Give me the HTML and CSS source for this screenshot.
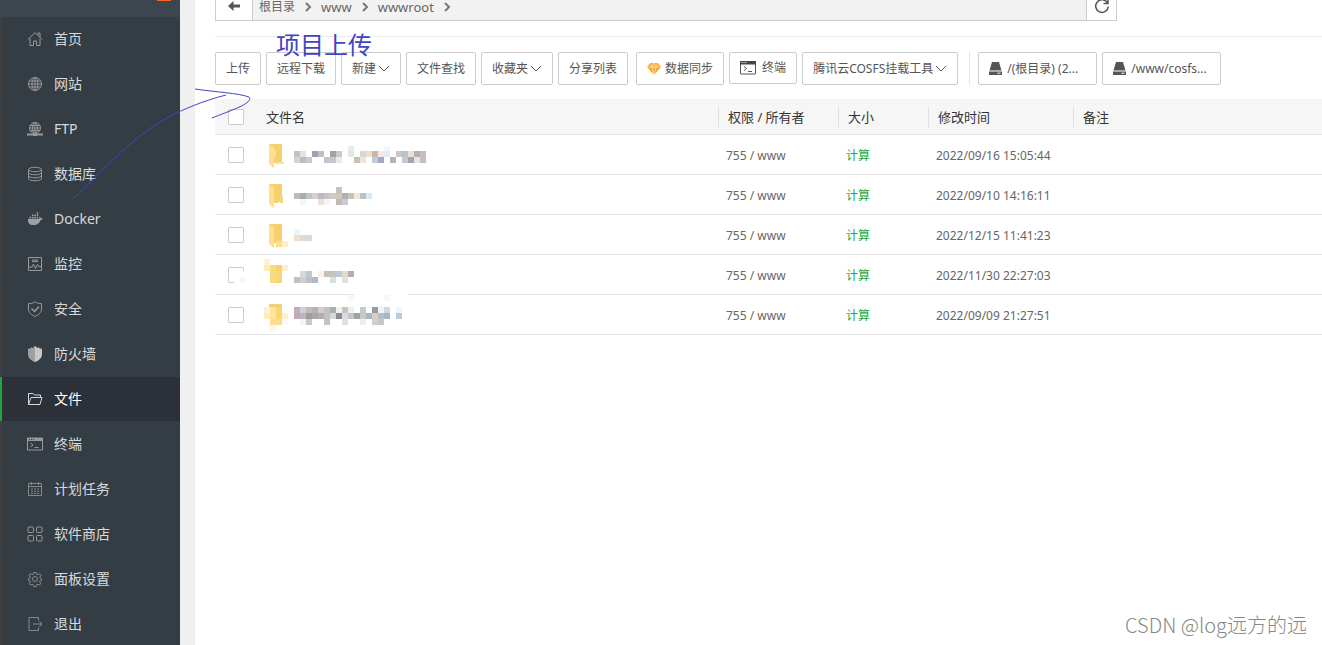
FILE: index.html
```html
<!DOCTYPE html>
<html lang="zh-CN">
<head>
<meta charset="utf-8">
<title>文件</title>
<link rel="stylesheet" href="styles.css">
</head>
<body>
<div class="app">
  <aside class="sidebar">
    <div class="sidebar-head"><span class="badge"></span></div>
    <nav class="menu">
      <a class="item" href="#"><svg class="ico" viewBox="0 0 16 16"><path d="M1 8.5 8 1.5l7 7M3 7.5V14.5h3.5V10h3v4.5H13V7.5M11 4V2h2v4"/></svg>首页</a>
      <a class="item" href="#"><svg class="ico" viewBox="0 0 16 16"><circle cx="8" cy="8" r="6.5"/><ellipse cx="8" cy="8" rx="3" ry="6.5"/><path d="M8 1.5v13M1.5 8h13M2.5 5h11M2.5 11h11"/></svg>网站</a>
      <a class="item" href="#"><svg class="ico" viewBox="0 0 16 16"><circle cx="8" cy="7" r="5.5"/><ellipse cx="8" cy="7" rx="2.5" ry="5.5"/><path d="M8 1.5v11M2.5 7h11M3 4.5h10M3 9.5h10"/><path d="M0 13.5h16M6 14h4" stroke-width="2"/></svg>FTP</a>
      <a class="item" href="#"><svg class="ico" viewBox="0 0 16 16"><ellipse cx="8" cy="3.5" rx="6.5" ry="2.2"/><path d="M1.500 3.500v9c0 3 13 3 13 0v-9M1.500 6.500c0 3 13 3 13 0M1.500 9.500c0 3 13 3 13 0"/></svg>数据库</a>
      <a class="item" href="#"><svg class="ico solid" viewBox="0 0 16 16"><path d="M1 8h11c.7-.5.5-2 .2-2.600 1 .2 1.500 1 1.500 1.800.9-.1 1.700.1 2.300.5-.4 1-1.500 1.200-2.500 1.200C12 13 9.500 14 6 14c-3.500 0-5.200-2-5-6zM2.500 5.800h1.600v1.600H2.500zM4.900 5.800h1.600v1.600H4.900zM7.300 5.800h1.600v1.600H7.300zM9.700 5.800h1.600v1.600H9.700zM4.900 3.500h1.600v1.600H4.900zM7.300 3.500h1.600v1.600H7.300zM9.700 3.500h1.600v1.600H9.700zM9.700 1.200h1.600v1.600H9.700z"/></svg>Docker</a>
      <a class="item" href="#"><svg class="ico" viewBox="0 0 16 16"><path d="M1.500 1.500h13v13h-13zM5 4h6M5 5.500h6M2 11h3l1.500-3 2 4.500 2-4 1 2H14"/></svg>监控</a>
      <a class="item" href="#"><svg class="ico" viewBox="0 0 16 16"><path d="M8 .8c2 1.400 4.200 1.800 6.500 1.800V8c0 3.500-3 6-6.500 7.300C4.500 14 1.500 11.500 1.500 8V2.600C3.800 2.600 6 2.200 8 .8z"/><path d="m4.500 7.500 3 3 4.500-5" stroke-width="1.500"/></svg>安全</a>
      <a class="item" href="#"><svg class="ico wall" viewBox="0 0 16 16"><path fill="#a0a0a0" d="M8 0v16C4 14.500 1 12 1 8V3l1.500-1v1L4 2V1l1.500 1L7 1V.5z"/><path fill="#c8c8c8" d="M8 0v16c4-1.500 7-4 7-8V3l-1.500-1v1L12 2V1l-1.500 1L9 1V.5z"/></svg>防火墙</a>
      <a class="item active" href="#" aria-current="page"><svg class="ico" viewBox="0 0 16 16"><path d="M1.500 13.500v-11h4.500l1.500 1.500h6v2.500M1.500 13.500 4 6.500h11l-2 7z"/></svg>文件</a>
      <a class="item" href="#"><svg class="ico" viewBox="0 0 16 16"><path d="M.5 2h15v12H.5zM3.500 7l2.500 2-2.500 2M7.500 11.500h4"/><path d="M1 3.500h14" stroke-width="3"/><path d="M2 3.500h1M4 3.500h1M6 3.500h1" stroke="#353d44"/></svg>终端</a>
      <a class="item" href="#"><svg class="ico dim" viewBox="0 0 16 16"><path d="M1.500 2.500h13v12h-13zM1.500 5.500h13M4.500 1v3M11.500 1v3M4 8h2M7 8h2M10 8h2M4 10.200h2M7 10.200h2M10 10.200h2M4 12.400h2M7 12.400h2M10 12.400h2"/></svg>计划任务</a>
      <a class="item" href="#"><svg class="ico" viewBox="0 0 16 16"><rect x="1" y="1" width="5.500" height="5.500" rx="1"/><rect x="9.500" y="1" width="5.500" height="5.500" rx="1"/><rect x="1" y="9.500" width="5.500" height="5.500" rx="1"/><rect x="9.500" y="9.500" width="5.500" height="5.500" rx="1"/></svg>软件商店</a>
      <a class="item" href="#"><svg class="ico dim" viewBox="0 0 16 16"><circle cx="8" cy="8" r="2.500"/><path d="M6.800 1.500h2.400l.5 1.800 1.600 0 1.700-.4 1 1.800-1.300 1.300.2 1 1.600.4v2l-1.600.5-.2 1.200 1.200 1.200-1.200 1.600-1.700-.5-1.300.3-.5 1.800H6.800l-.5-1.800-1.300-.3-1.700.5-1.200-1.600 1.200-1.200-.2-1.200-1.600-.5v-2l1.600-.4.2-1L2 4.700l1-1.800 1.700.4 1.600 0z"/></svg>面板设置</a>
      <a class="item" href="#"><svg class="ico dim" viewBox="0 0 16 16"><path d="M11.500 4.500v-3h-9.500v13h9.500v-3M6 8h9M12.500 5.500 15 8l-2.500 2.500"/></svg>退出</a>
    </nav>
  </aside>

  <main class="content">
    <div class="pathbar">
      <button class="path-btn back" aria-label="返回"><svg width="14" height="12" viewBox="0 0 14 12"><path d="M1 6 6.500 1v3.500H13v3H6.500V11z" fill="#555"/></svg></button>
      <div class="crumbs">
        <a href="#">根目录</a><svg class="sep" viewBox="0 0 8 10"><path d="m2 1 4 4-4 4"/></svg>
        <a href="#" class="latin">www</a><svg class="sep" viewBox="0 0 8 10"><path d="m2 1 4 4-4 4"/></svg>
        <a href="#" class="latin">wwwroot</a><svg class="sep" viewBox="0 0 8 10"><path d="m2 1 4 4-4 4"/></svg>
      </div>
      <button class="path-btn refresh" aria-label="刷新"><svg width="16" height="14" viewBox="0 2 16 14"><path d="M13.500 5A6.300 6.300 0 1 0 14.300 8.500M14 1v4.500H9.500" fill="none" stroke="#555" stroke-width="1.500"/></svg></button>
    </div>

    <div class="toolbar">
      <button class="btn">上传</button>
      <button class="btn">远程下载</button>
      <button class="btn">新建<svg class="down" viewBox="0 0 12 8"><path d="m1 1 5 5 5-5"/></svg></button>
      <button class="btn">文件查找</button>
      <button class="btn">收藏夹<svg class="down" viewBox="0 0 12 8"><path d="m1 1 5 5 5-5"/></svg></button>
      <button class="btn">分享列表</button>
      <button class="btn sync"><svg class="gem" viewBox="0 0 14 12"><path d="M3 0h8l3 4-7 8-7-8z" fill="#fba51f"/><path d="M0 4h14M3 0l2 4 2 8 2-8 2-4M5 4l2-4 2 4" fill="none" stroke="#fff" stroke-width=".6"/></svg>数据同步</button>
      <button class="btn term"><svg class="term-ico" viewBox="0 0 16 14"><path d="M.5 1h15v12H.5zM4 5.500l2.500 2L4 9.500M8 10.500h4" fill="none" stroke="#555"/><path d="M0 0h16v3.500H0z" fill="#444"/><path d="M1.500 1.500h1M3.500 1.500h1M5.500 1.500h1" stroke="#fff"/></svg>终端</button>
      <button class="btn">腾讯云COSFS挂载工具<svg class="down" viewBox="0 0 12 8"><path d="m1 1 5 5 5-5"/></svg></button>
      <span class="divider"></span>
      <button class="btn disk"><svg class="disk-ico" viewBox="0 0 13 13"><path d="M3 0h7l2.500 8.500H.5zM0 9.500h13V13H0z"/><path d="M8.500 11.200h3" stroke="#fff"/></svg>/(根目录) (2...</button>
      <button class="btn disk"><svg class="disk-ico" viewBox="0 0 13 13"><path d="M3 0h7l2.500 8.500H.5zM0 9.500h13V13H0z"/><path d="M8.500 11.200h3" stroke="#fff"/></svg>/www/cosfs...</button>
    </div>

    <table class="files">
      <colgroup><col class="c-check"><col class="c-name"><col class="c-perm"><col class="c-size"><col class="c-time"><col></colgroup>
      <thead>
        <tr><th class="check"><input type="checkbox" aria-label="全选"></th><th><span class="plain">文件名</span></th><th><span>权限 / 所有者</span></th><th><span>大小</span></th><th><span>修改时间</span></th><th><span>备注</span></th></tr>
      </thead>
      <tbody>
        <tr><td class="check"><input type="checkbox" aria-label="选择第1项"></td><td class="file"><svg class="name" viewBox="0 0 180 39" data-row="0"></svg></td><td>755 / www</td><td><a href="#">计算</a></td><td>2022/09/16 15:05:44</td><td></td></tr>
        <tr><td class="check"><input type="checkbox" aria-label="选择第2项"></td><td class="file"><svg class="name" viewBox="0 0 180 39" data-row="1"></svg></td><td>755 / www</td><td><a href="#">计算</a></td><td>2022/09/10 14:16:11</td><td></td></tr>
        <tr><td class="check"><input type="checkbox" aria-label="选择第3项"></td><td class="file"><svg class="name" viewBox="0 0 180 39" data-row="2"></svg></td><td>755 / www</td><td><a href="#">计算</a></td><td>2022/12/15 11:41:23</td><td></td></tr>
        <tr><td class="check"><input type="checkbox" aria-label="选择第4项"></td><td class="file"><svg class="name" viewBox="0 0 180 39" data-row="3"></svg></td><td>755 / www</td><td><a href="#">计算</a></td><td>2022/11/30 22:27:03</td><td></td></tr>
        <tr><td class="check"><input type="checkbox" aria-label="选择第5项"></td><td class="file"><svg class="name" viewBox="0 0 180 39" data-row="4"></svg></td><td>755 / www</td><td><a href="#">计算</a></td><td>2022/09/09 21:27:51</td><td></td></tr>
      </tbody>
    </table>
  </main>

  <svg class="ink" width="420" height="310" viewBox="0 0 420 310">
    <path d="M234 271h12v12h-12zM355 293h53v3h-53z" fill="#fff"/>
    <path d="M240 277h6v6h-6zM348 295h6v6h-6zM384 295h6v6h-6z" fill="#f8f8f8"/>
    <path d="M73 199C90 184 108 163 128 146C150 126 180 107 226 95M195 89C215 92 238 93 249 97C254 103 232 110 212 118" fill="none" stroke="#4045c4"/>
  </svg>
  <div class="note">项目上传</div>
  <div class="watermark">CSDN @log远方的远</div>
</div>
<script src="names.js"></script>
</body>
</html>
```
FILE: styles.css
```css
* { box-sizing: border-box; }

body {
  margin: 0;
  background: #fff;
  color: #666;
  font: 12px/16px "Noto Sans", "Noto Sans CJK SC", sans-serif;
}

a { color: inherit; text-decoration: none; }
button { font: inherit; color: inherit; }
svg { flex: none; }

.app {
  position: relative;
  display: flex;
  min-height: 100vh;
}

.sidebar { flex: none; width: 180px; background: #353d44; }
.sidebar-head { position: relative; height: 17px; background: #3d454f; }
.badge {
  position: absolute;
  top: 0;
  right: 9px;
  width: 14px;
  height: 1px;
  background: #f26522;
}

.menu { display: flex; flex-direction: column; gap: 1px; }
.item {
  display: flex;
  align-items: center;
  gap: 11px;
  height: 44px;
  padding-left: 25px;
  border-left: 2px solid #423f3f;
  color: #d8dadc;
  font-size: 14px;
}
.item.active { background: #2c3038; border-left-color: #20a53a; color: #fff; }

.ico {
  width: 16px;
  height: 16px;
  fill: none;
  stroke: #999;
  stroke-width: 1;
}
.ico.dim { stroke: #858a8d; }
.ico.solid { fill: #a0a0a0; stroke: none; }
.ico.wall { stroke: none; }
.active .ico { stroke: #d8d8d8; }

.content {
  flex: 1;
  min-width: 0;
  padding-left: 20px;
  border-left: 15px solid #f0f0f0;
}

.pathbar {
  display: flex;
  width: 902px;
  max-width: 100%;
  height: 21px;
  border: 1px solid #ccc;
  border-top: 0;
  background: #f2f2f2;
}
.path-btn {
  display: flex;
  align-items: flex-start;
  justify-content: center;
  padding: 0;
  border: 0;
  background: #fff;
}
.back { width: 37px; border-right: 1px solid #ccc; }
.refresh { width: 30px; border-left: 1px solid #ccc; }
.crumbs {
  display: flex;
  flex: 1;
  align-items: center;
  gap: 9px;
  height: 14px;
  padding-left: 6px;
  line-height: 14px;
}
.latin { font-size: 13px; }
.sep { width: 8px; height: 10px; fill: none; stroke: #777; stroke-width: 2; }

.toolbar {
  display: flex;
  align-items: flex-start;
  gap: 5px;
  margin-top: 15px;
  padding: 15px 0 14px;
  border-top: 1px solid #ebebeb;
}
.btn {
  display: flex;
  flex: none;
  align-items: center;
  height: 33px;
  padding: 0 10px;
  border: 1px solid #ccc;
  border-radius: 2px;
  background: #fff;
  color: #555;
  white-space: nowrap;
}
.down { width: 12px; height: 8px; margin-left: 2px; fill: none; stroke: #555; }
.sync { margin-left: 3px; }
.gem { width: 14px; height: 12px; margin-right: 4px; }
.term { height: 32px; }
.term-ico { width: 16px; height: 14px; margin-right: 6px; }
.divider { width: 1px; height: 33px; margin: 0 3px 0 6px; background: #e4e4e4; }
.disk { width: 119px; }
.disk-ico { width: 13px; height: 13px; margin-right: 5px; fill: #555; }

.files {
  width: 100%;
  border-collapse: separate;
  border-spacing: 0;
  table-layout: fixed;
}
.c-check { width: 41px; }
.c-name { width: 462px; }
.c-perm { width: 120px; }
.c-size { width: 90px; }
.c-time { width: 145px; }
.files th {
  height: 36px;
  padding: 0;
  border-bottom: 1px solid #e6e6e6;
  background: #f6f6f6;
  color: #333;
  font-size: 13px;
  font-weight: 400;
  text-align: left;
}
.files th span {
  display: block;
  padding-left: 9px;
  border-left: 1px solid #e0e0e0;
  line-height: 20px;
}
.files th .plain { border-left-color: transparent; }
.files td {
  height: 40px;
  padding: 2px 0 0 8px;
  border-bottom: 1px solid #e6e6e6;
}
.files td a { color: #20a53a; }
.files .check { padding: 0 0 0 13px; }
.files .file { padding-top: 0; }
.files input {
  display: block;
  width: 16px;
  height: 16px;
  margin: 0;
  appearance: none;
  border: 1px solid #ccc;
  border-radius: 1px;
  background: #fff;
}
.name { display: block; width: 180px; height: 39px; shape-rendering: crispEdges; }

.ink { position: absolute; top: 0; left: 0; pointer-events: none; }
.note {
  position: absolute;
  top: 30px;
  left: 276px;
  color: #4045c4;
  font-size: 24px;
  line-height: 30px;
}
.watermark {
  position: absolute;
  right: 15px;
  bottom: 7px;
  color: #888;
  font: 300 20px/28px "Noto Sans CJK SC", sans-serif;
}
```
FILE: names.js
```js
// Each row: optional folder shape, then strips of 6px blocks as [y, first column, colours]; "-" is an empty block.
const folder = [
  ["M5 9h13v18l-8 1z", "#f6d06c"],
  ["M5 9l5 3v21l-5-4z", "#fce08e"]
];
const rows = [
  { shapes: folder.concat([["M11 27h9v2h-9z", "#fae3a0"], ["M7 16h5v6h-5z", "#fbe09a"]]), strips: [
    [11, 14, "e6eee4 - - - - - eff7fd"],
    [16, 5, "c2c2be e6e2de - a0a0b2 c2bfc8 - a9a09d c9c9c9 - e0eae0 - d2d6da efdcc9 c6b8b2 f6e8e0 e3ebef - cfc4c8 b9c4ca f0dfcc b8acba cbb9c4"],
    [22, 5, "d4d4ce c0bcb6 c5cbd6 - - c9c2ce c0c9d0 ebebeb - - c1c1bb f4e3d0 - c6c9d4 9fabbd - acb5bd - c5c9ce 9fa4b4 e2e8e4 cdbcc6"]] },
  { shapes: folder.concat([["M16 22h3v6h-3z", "#f9d878"]]), strips: [
    [12, 12, "c3c3bf"],
    [18, 5, "bcbcbe b2a9a5 bcc5c4 d8cfcc bfb9c3 c2c5cc d3c9c0 d0c6bc b5aeab c1c4bf f4e5d2 bfc0c4 d8eaf8"],
    [24, 6, "f0f7fc - - e9e2dc fbf3ee - c3b9b3 c7cdd6"]] },
  { shapes: folder, strips: [
    [14, 5, "eef5fb"],
    [20, 5, "f1dfca e3d7cf e0d8d2"],
    [26, 2, "fae094 fdf0c8"]] },
  { shapes: [], strips: [
    [4, 0, "fef3d4"],
    [10, 0, "fdecb8 f8da80 f6d26c fdf0d0"],
    [16, 1, "f8da80 f8d674"],
    [22, 1, "f9da7c f8d674"],
    [16, 6, "d2d9e2 c0c7cb - faf0e8 c8bfbd c1c4bf bccbd2 e4dccb b6aeaa"],
    [22, 5, "c5bfbc d6cdcb bcc2cd b4b7c4 - - d6e0e1 - dbe4e2"]] },
  { shapes: [["M5 9h13v3h-13z", "#eed07c"]], strips: [
    [12, 0, "fef3d0 fde49a f8d674"],
    [18, 0, "fdeeba fde49a f8d674 fdf0d0"],
    [24, 1, "fce08c fade90 fafafa"],
    [30, 1, "fef7e2"],
    [12, 5, "c2adb8 d3ced9 c0bcbc bbb0a9 d6cbcb c0c2c4 acaeb0 f2f2f0 c5c5c2 eef0ec - c5cacb - 989a9c f3f2fb cdd8e2 - eef5fc"],
    [18, 5, "c1acb5 b8b6c0 a49c99 a8a6ac b9aca8 c0c2c4 d8dad6 8c8c8c d4dce5 c3c5c5 9fa3a2 c8c9c9 a9b5bf d9cfc6 b3c0c8 a9b6c0 - bccbd6"],
    [24, 6, "fbf3ea c9c8ca - - c3c3c3 - - e6e0da - - eeeeee - d6cfc6 c4c8cc"]] }
];

document.querySelectorAll(".name").forEach(svg => {
  const row = rows[svg.dataset.row];
  let out = row.shapes.map(([d, fill]) => `<path d="${d}" fill="${fill}"/>`).join("");
  row.strips.forEach(([y, first, colours]) => {
    colours.split(" ").forEach((c, i) => {
      if (c !== "-") out += `<path d="M${(first + i) * 6} ${y}h6v6h-6z" fill="#${c}"/>`;
    });
  });
  svg.innerHTML = out;
});
```
